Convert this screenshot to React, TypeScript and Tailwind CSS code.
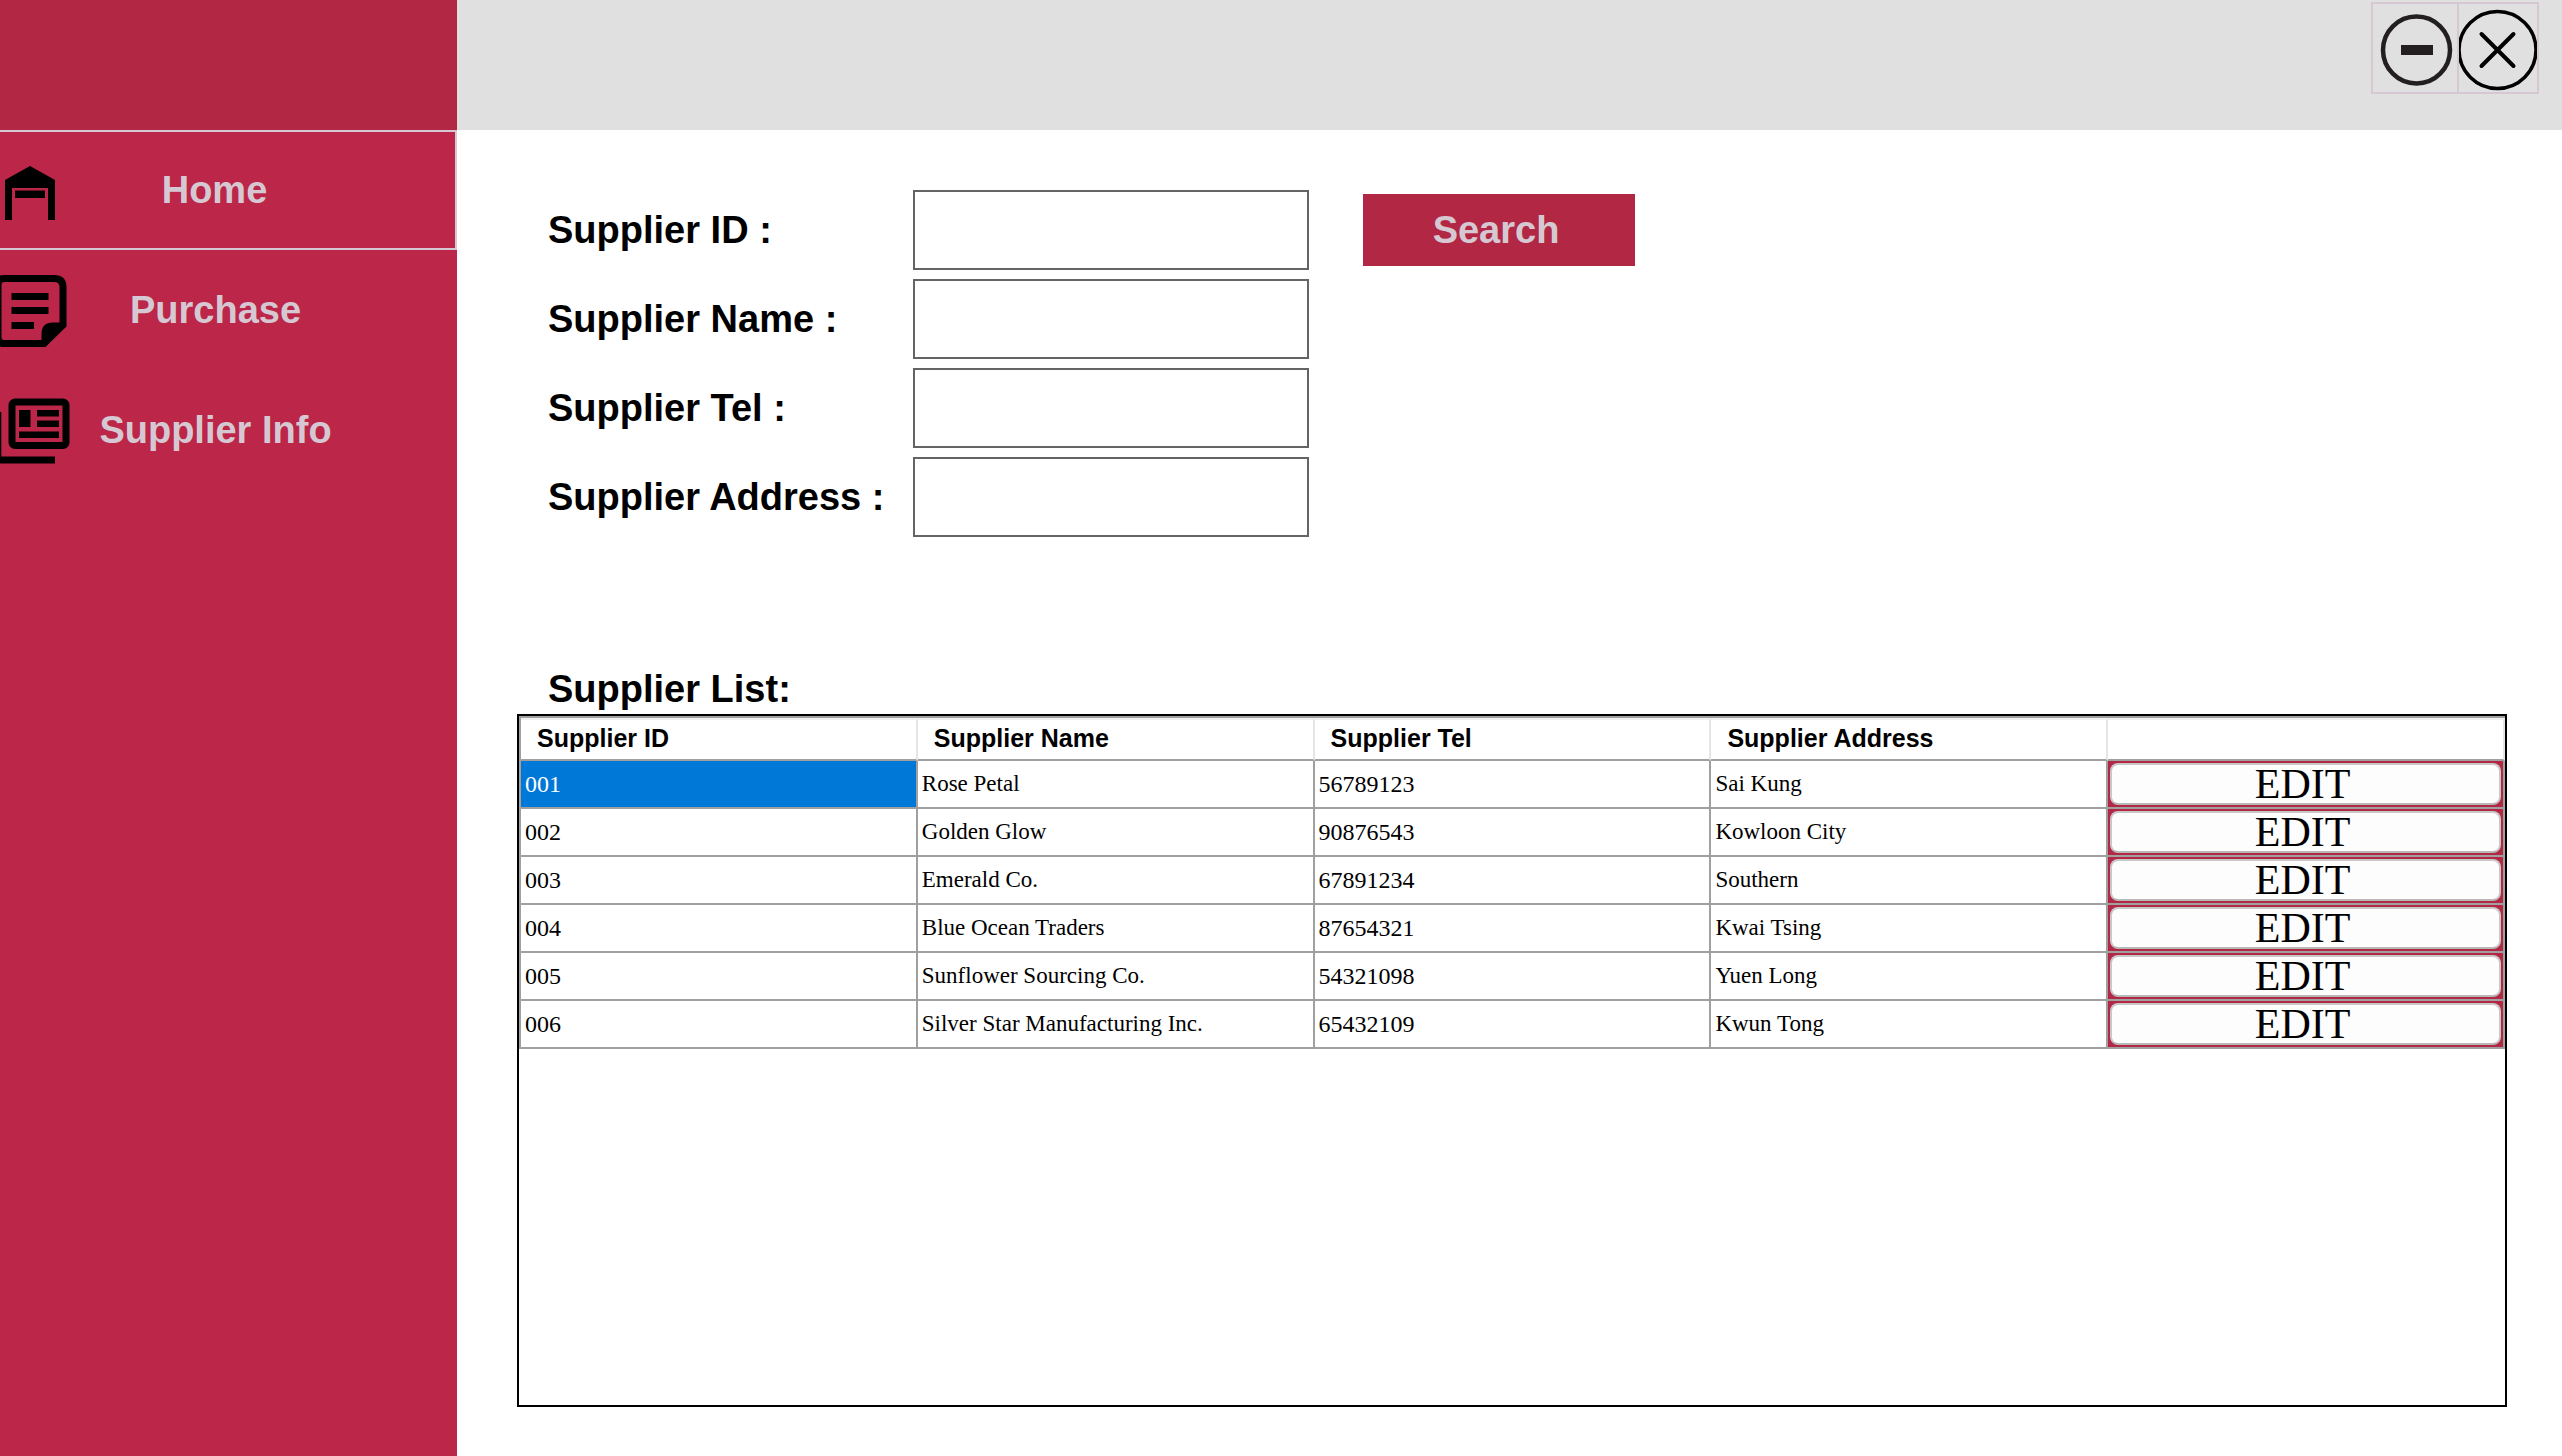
import React from "react";

const suppliers = [
  { id: "001", name: "Rose Petal", tel: "56789123", address: "Sai Kung" },
  { id: "002", name: "Golden Glow", tel: "90876543", address: "Kowloon City" },
  { id: "003", name: "Emerald Co.", tel: "67891234", address: "Southern" },
  { id: "004", name: "Blue Ocean Traders", tel: "87654321", address: "Kwai Tsing" },
  { id: "005", name: "Sunflower Sourcing Co.", tel: "54321098", address: "Yuen Long" },
  { id: "006", name: "Silver Star Manufacturing Inc.", tel: "65432109", address: "Kwun Tong" },
];

const fields = [
  { id: "supplier-id", label: "Supplier ID :" },
  { id: "supplier-name", label: "Supplier Name :" },
  { id: "supplier-tel", label: "Supplier Tel :" },
  { id: "supplier-address", label: "Supplier Address :" },
];

const headings = ["Supplier ID", "Supplier Name", "Supplier Tel", "Supplier Address", ""];

function GarageIcon() {
  return (
    <svg className="h-20 w-18 shrink-0" viewBox="0 0 72 80" aria-hidden="true">
      <path d="M30 16 55 30V70H48V38H12V70H5V30Z" />
      <path d="M15 40.500H45V48H15Z" />
    </svg>
  );
}

function NoteIcon() {
  return (
    <svg className="h-20 w-18 shrink-0" viewBox="0 0 72 80" aria-hidden="true">
      <path
        d="M4 8.500H54Q63 8.500 63 17V55L44 73.500H4Q-2 73.500 -2 67V15Q-2 8.500 4 8.500Z"
        fill="none"
        stroke="black"
        strokeWidth="7"
      />
      <path d="M41.500 75V64Q41.500 52.500 53 52.500H65V57L45 77Z" />
      <path d="M11.500 23H48.500V30H11.500ZM11.500 37H48.500V44H11.500ZM11.500 52H34V59H11.500Z" />
    </svg>
  );
}

function NewsIcon() {
  return (
    <svg className="h-20 w-18 shrink-0" viewBox="0 0 72 80" aria-hidden="true">
      <rect x="12" y="12" width="54" height="43.500" rx="3" fill="none" stroke="black" strokeWidth="7" />
      <path d="M19 20H30.500V37H19ZM37 20H59V26.500H37ZM37 30.500H59V37H37ZM19 41.500H59V48H19Z" />
      <path d="M-6 22H1.300V66.500H55V73.500H-6Z" />
    </svg>
  );
}

function NavButton({ label, icon, active }: { label: string; icon: React.ReactNode; active?: boolean }) {
  return (
    <button
      type="button"
      className={
        active
          ? "flex h-[120px] w-full items-center border-y-2 border-r-2 border-[#d6c8d2] pr-[98px]"
          : "flex h-[120px] w-full items-center pr-[98px]"
      }
    >
      {icon}
      <span className="flex-1 text-center text-[38px] font-bold text-[#d6c8d2]">{label}</span>
    </button>
  );
}

export default function App() {
  return (
    <div className="flex min-h-screen bg-white font-['Liberation_Sans',Arial,sans-serif] text-black">
      <aside className="flex w-[457px] shrink-0 flex-col bg-[#bb2649]">
        <div className="h-[130px] bg-[#b22844]" />
        <nav>
          <NavButton label="Home" icon={<GarageIcon />} active />
          <NavButton label="Purchase" icon={<NoteIcon />} />
          <NavButton label="Supplier Info" icon={<NewsIcon />} />
        </nav>
      </aside>

      <div className="flex min-w-0 flex-1 flex-col">
        <header className="flex h-[130px] shrink-0 items-start justify-end bg-[#e0e0e0] pt-0.5 pr-[23px]">
          <button
            type="button"
            aria-label="Minimize"
            className="flex h-[92px] w-[88px] items-center justify-center border-2 border-[#d6c8d2]"
          >
            <svg className="h-20 w-20" viewBox="0 0 80 80" aria-hidden="true">
              <circle cx="41.500" cy="42" r="33.500" fill="none" stroke="#231f20" strokeWidth="4.500" />
              <path d="M26 37H58V47H26Z" fill="#231f20" />
            </svg>
          </button>
          <button
            type="button"
            aria-label="Close"
            className="flex h-[92px] w-20 items-center justify-center overflow-hidden border-y-2 border-r-2 border-[#d6c8d2]"
          >
            <svg className="h-[86px] w-[82px] shrink-0" viewBox="0 0 82 86" fill="none" stroke="black" aria-hidden="true">
              <circle cx="40.500" cy="45" r="38.500" strokeWidth="3.500" />
              <path d="M24.500 29 56.500 61M56.500 29 24.500 61" strokeWidth="4" strokeLinecap="round" />
            </svg>
          </button>
        </header>

        <main className="flex flex-1 flex-col pt-[60px] pr-[55px] pb-[49px] pl-[60px]">
          <form className="flex flex-col gap-[9px] pl-[31px]" onSubmit={(e) => e.preventDefault()}>
            {fields.map((field, i) => (
              <div key={field.id} className="flex items-center">
                <label htmlFor={field.id} className="w-[365px] text-[38px] font-bold">
                  {field.label}
                </label>
                <input
                  id={field.id}
                  type="text"
                  className="h-20 w-[396px] border-2 border-[#646464] bg-white px-2 text-[38px] outline-none"
                />
                {i === 0 && (
                  <button
                    type="submit"
                    className="ml-[54px] h-[72px] w-[272px] bg-[#b22844] pr-1.5 text-[38px] font-bold text-[#d6c8d2]"
                  >
                    Search
                  </button>
                )}
              </div>
            ))}
          </form>

          <h2 className="mt-[129px] pb-0.5 pl-[31px] text-[38px] leading-[46px] font-bold">Supplier List:</h2>

          <div className="flex-1 border-2 border-black">
            <table className="w-full table-fixed border-separate border-spacing-0 border-t-2 border-l-2 border-[#a0a0a0]">
              <thead>
                <tr className="h-[43px]">
                  {headings.map((heading, i) => (
                    <th
                      key={i}
                      scope="col"
                      className="border-t-2 border-r-2 border-b-2 border-t-[#f0f0f0] border-r-[#e5e5e5] border-b-[#a0a0a0] p-0 pb-1 pl-4 text-left text-[25px] leading-[30px] font-bold"
                    >
                      {heading}
                    </th>
                  ))}
                </tr>
              </thead>
              <tbody className="font-['Liberation_Serif','Times_New_Roman',serif] text-[23px] leading-[30px]">
                {suppliers.map((s, i) => (
                  <tr key={s.id} className="h-12">
                    <td
                      className={
                        i === 0
                          ? "border-r-2 border-b-2 border-[#a0a0a0] bg-[#0078d7] p-0 pl-1 text-2xl text-white"
                          : "border-r-2 border-b-2 border-[#a0a0a0] p-0 pl-1 text-2xl"
                      }
                    >
                      {s.id}
                    </td>
                    <td className="border-r-2 border-b-2 border-[#a0a0a0] p-0 pl-1">{s.name}</td>
                    <td className="border-r-2 border-b-2 border-[#a0a0a0] p-0 pl-1 text-2xl">{s.tel}</td>
                    <td className="border-r-2 border-b-2 border-[#a0a0a0] p-0 pl-1">{s.address}</td>
                    <td className="border-r-2 border-b-2 border-[#a0a0a0] p-0">
                      <button
                        type="button"
                        aria-label={`EDIT ${s.id}`}
                        className="block h-[46px] w-full bg-[#b22844] p-0.5"
                      >
                        <span className="block h-[42px] rounded-lg border-2 border-[#c8c8c8] border-b-[#b8b8b8] bg-[#fdfdfd] pr-1.5 text-[42px] leading-[38px]">
                          EDIT
                        </span>
                      </button>
                    </td>
                  </tr>
                ))}
              </tbody>
            </table>
          </div>
        </main>
      </div>
    </div>
  );
}
